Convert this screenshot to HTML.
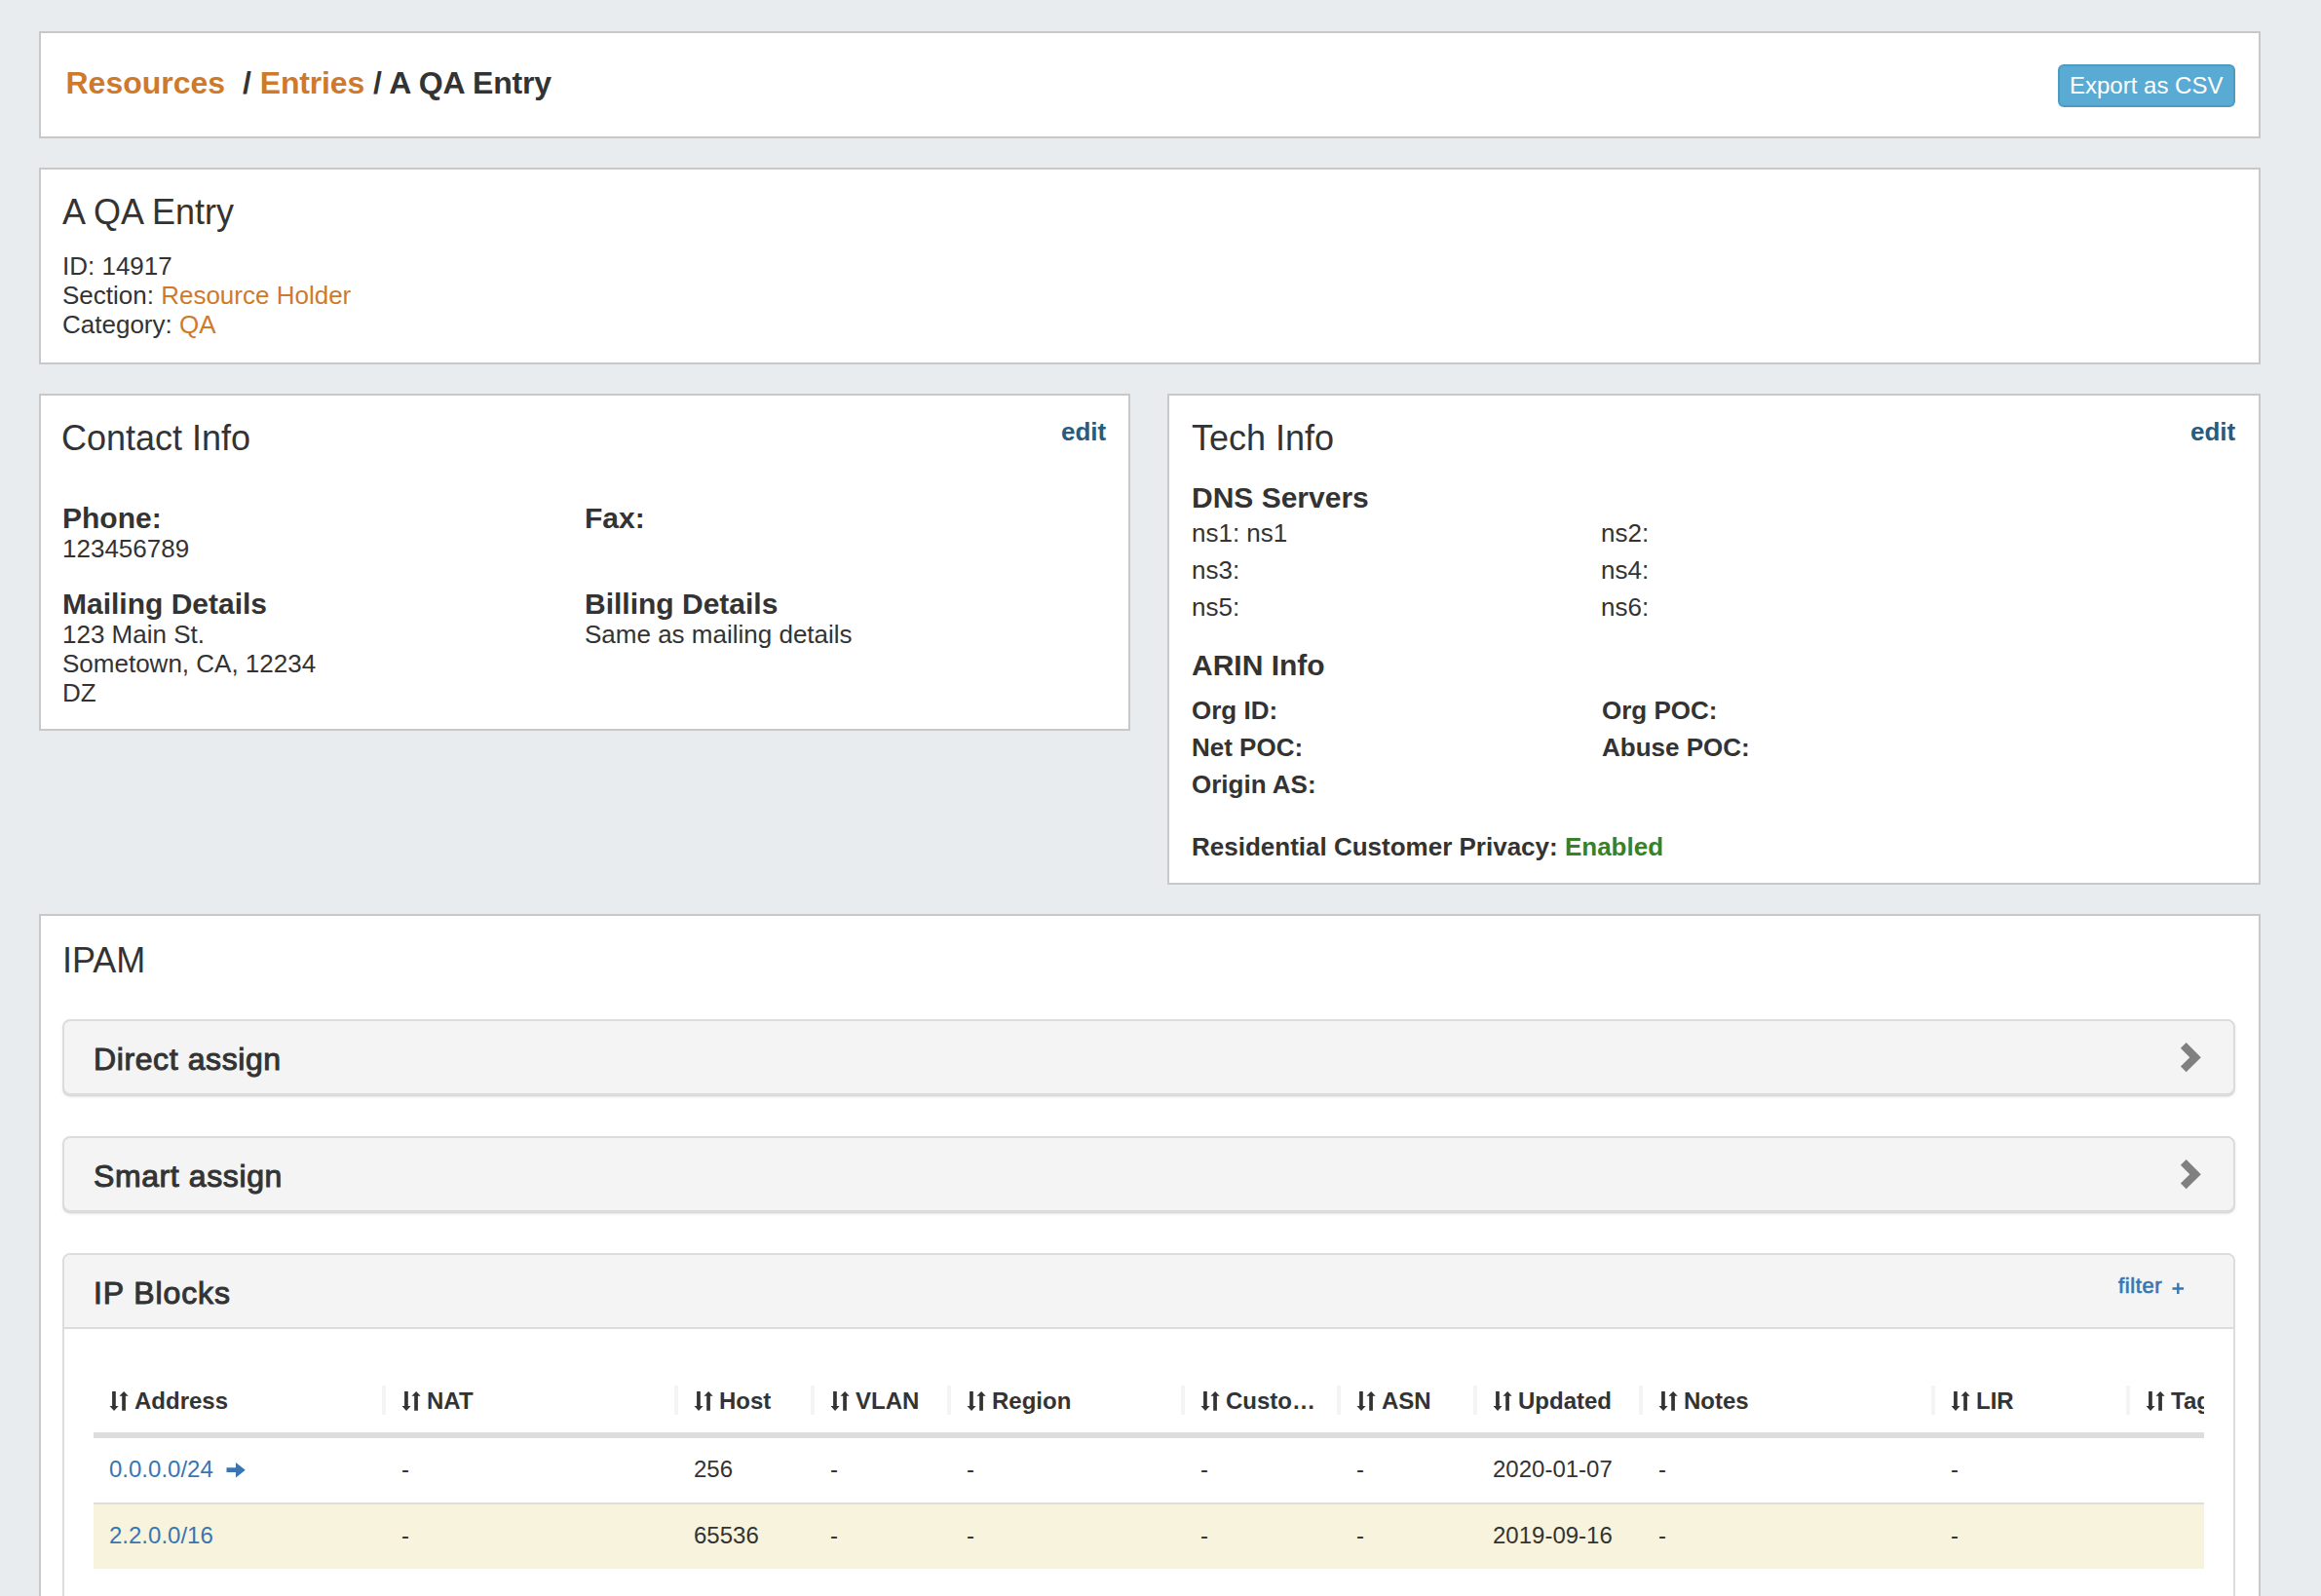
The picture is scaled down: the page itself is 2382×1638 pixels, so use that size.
<!DOCTYPE html>
<html><head><meta charset="utf-8"><style>
html,body{margin:0;padding:0;}
body{width:2382px;height:1638px;overflow:hidden;background:#e9ecef;position:relative;font-family:"Liberation Sans",sans-serif;color:#333;}
.t{position:absolute;white-space:nowrap;}
.r{position:absolute;}
@media (max-width:1300px){html{zoom:0.5;}}
</style></head><body>
<div class="r" style="left:40px;top:32px;width:2280px;height:110px;background:#fff;border:2px solid #c8c8c8;box-sizing:border-box"></div>
<div class="t" style="left:67.5px;top:64.91px;font-size:32px;line-height:40px;font-weight:700;color:#333;"><span style="color:#cf7a2b">Resources</span>&nbsp; / <span style="letter-spacing:-0.15px"><span style="color:#cf7a2b">Entries</span> / A QA Entry</span></div>
<div class="r" style="left:2112px;top:66px;width:182px;height:44px;background:#5aabd3;border:2px solid #4b9bc4;border-radius:6px;box-sizing:border-box"></div>
<div class="t" style="left:2124px;top:72.68px;font-size:24px;line-height:30px;color:#fff;">Export as CSV</div>
<div class="r" style="left:40px;top:172px;width:2280px;height:202px;background:#fff;border:2px solid #c8c8c8;box-sizing:border-box"></div>
<div class="t" style="left:64px;top:195.03px;font-size:36px;line-height:45px;color:#333;">A QA Entry</div>
<div class="t" style="left:64px;top:256.99px;font-size:26px;line-height:32px;color:#333;">ID: 14917</div>
<div class="t" style="left:64px;top:287.29px;font-size:26px;line-height:32px;color:#333;">Section: <span style="color:#cf7a2b">Resource Holder</span></div>
<div class="t" style="left:64px;top:316.99px;font-size:26px;line-height:32px;color:#333;">Category: <span style="color:#cf7a2b">QA</span></div>
<div class="r" style="left:40px;top:404px;width:1120px;height:346px;background:#fff;border:2px solid #c8c8c8;box-sizing:border-box"></div>
<div class="t" style="left:63px;top:427.03px;font-size:36px;line-height:45px;color:#333;">Contact Info</div>
<div class="t" style="left:1089px;top:426.99px;font-size:26px;line-height:32px;font-weight:700;color:#275b80;">edit</div>
<div class="t" style="left:64px;top:512.61px;font-size:30px;line-height:38px;font-weight:700;color:#333;">Phone:</div>
<div class="t" style="left:64px;top:546.99px;font-size:26px;line-height:32px;color:#333;">123456789</div>
<div class="t" style="left:600px;top:512.61px;font-size:30px;line-height:38px;font-weight:700;color:#333;">Fax:</div>
<div class="t" style="left:64px;top:600.61px;font-size:30px;line-height:38px;font-weight:700;color:#333;">Mailing Details</div>
<div class="t" style="left:64px;top:634.99px;font-size:26px;line-height:32px;color:#333;">123 Main St.</div>
<div class="t" style="left:64px;top:664.99px;font-size:26px;line-height:32px;color:#333;">Sometown, CA, 12234</div>
<div class="t" style="left:64px;top:694.99px;font-size:26px;line-height:32px;color:#333;">DZ</div>
<div class="t" style="left:600px;top:600.61px;font-size:30px;line-height:38px;font-weight:700;color:#333;">Billing Details</div>
<div class="t" style="left:600px;top:634.99px;font-size:26px;line-height:32px;color:#333;">Same as mailing details</div>
<div class="r" style="left:1198px;top:404px;width:1122px;height:504px;background:#fff;border:2px solid #c8c8c8;box-sizing:border-box"></div>
<div class="t" style="left:1223px;top:427.03px;font-size:36px;line-height:45px;color:#333;">Tech Info</div>
<div class="t" style="left:2248px;top:426.99px;font-size:26px;line-height:32px;font-weight:700;color:#275b80;">edit</div>
<div class="t" style="left:1223px;top:492.40px;font-size:30px;line-height:38px;font-weight:700;color:#333;">DNS Servers</div>
<div class="t" style="left:1223px;top:531.19px;font-size:26px;line-height:32px;color:#333;">ns1: ns1</div>
<div class="t" style="left:1223px;top:568.99px;font-size:26px;line-height:32px;color:#333;">ns3:</div>
<div class="t" style="left:1223px;top:606.79px;font-size:26px;line-height:32px;color:#333;">ns5:</div>
<div class="t" style="left:1643px;top:531.19px;font-size:26px;line-height:32px;color:#333;">ns2:</div>
<div class="t" style="left:1643px;top:568.99px;font-size:26px;line-height:32px;color:#333;">ns4:</div>
<div class="t" style="left:1643px;top:606.79px;font-size:26px;line-height:32px;color:#333;">ns6:</div>
<div class="t" style="left:1223px;top:664.40px;font-size:30px;line-height:38px;font-weight:700;color:#333;">ARIN Info</div>
<div class="t" style="left:1223px;top:713.19px;font-size:26px;line-height:32px;font-weight:700;color:#333;">Org ID:</div>
<div class="t" style="left:1223px;top:750.79px;font-size:26px;line-height:32px;font-weight:700;color:#333;">Net POC:</div>
<div class="t" style="left:1223px;top:789.39px;font-size:26px;line-height:32px;font-weight:700;color:#333;">Origin AS:</div>
<div class="t" style="left:1644px;top:712.99px;font-size:26px;line-height:32px;font-weight:700;color:#333;">Org POC:</div>
<div class="t" style="left:1644px;top:750.99px;font-size:26px;line-height:32px;font-weight:700;color:#333;">Abuse POC:</div>
<div class="t" style="left:1223px;top:852.99px;font-size:26px;line-height:32px;font-weight:700;color:#333;">Residential Customer Privacy: <span style="color:#36812a">Enabled</span></div>
<div class="r" style="left:40px;top:938px;width:2280px;height:762px;background:#fff;border:2px solid #c8c8c8;box-sizing:border-box"></div>
<div class="t" style="left:64px;top:963.23px;font-size:36px;line-height:45px;color:#333;">IPAM</div>
<div class="r" style="left:64px;top:1046px;width:2230px;height:78px;background:#f4f4f4;border:2px solid #dcdcdc;border-radius:8px;box-sizing:border-box;box-shadow:0 1.5px 0 #dcdcdc, 0 2px 4px rgba(0,0,0,0.06)"></div>
<div class="t" style="left:96px;top:1066.91px;font-size:32px;line-height:40px;color:#333;-webkit-text-stroke:1px #333;letter-spacing:0.6px">Direct assign</div>
<svg class="r" style="left:2236px;top:1068.0px" width="24" height="34" viewBox="0 0 24 34"><path d="M1.9 7.8 L7.7 2.1 L22.8 17.2 L7.7 32.2 L1.9 26.4 L11.3 17.2 Z" fill="#808080"/></svg>
<div class="r" style="left:64px;top:1166px;width:2230px;height:78px;background:#f4f4f4;border:2px solid #dcdcdc;border-radius:8px;box-sizing:border-box;box-shadow:0 1.5px 0 #dcdcdc, 0 2px 4px rgba(0,0,0,0.06)"></div>
<div class="t" style="left:96px;top:1186.91px;font-size:32px;line-height:40px;color:#333;-webkit-text-stroke:1px #333;letter-spacing:0.6px">Smart assign</div>
<svg class="r" style="left:2236px;top:1188.0px" width="24" height="34" viewBox="0 0 24 34"><path d="M1.9 7.8 L7.7 2.1 L22.8 17.2 L7.7 32.2 L1.9 26.4 L11.3 17.2 Z" fill="#808080"/></svg>
<div class="r" style="left:64px;top:1286px;width:2230px;height:414px;background:#fff;border:2px solid #dcdcdc;border-radius:8px;box-sizing:border-box"></div>
<div class="r" style="left:66px;top:1288px;width:2226px;height:74px;background:#f4f4f4;border-radius:6px 6px 0 0"></div>
<div class="r" style="left:66px;top:1362px;width:2226px;height:2px;background:#dcdcdc"></div>
<div class="t" style="left:96px;top:1306.91px;font-size:32px;line-height:40px;color:#333;-webkit-text-stroke:1px #333;letter-spacing:0.9px">IP Blocks</div>
<div class="t" style="left:2174px;top:1306.38px;font-size:22px;line-height:28px;color:#3a75b3;-webkit-text-stroke:0.7px #3a75b3;letter-spacing:0.6px">filter</div>
<svg class="r" style="left:2229px;top:1316px" width="13" height="13" viewBox="0 0 13 13"><path d="M5.1 0.7 H7.5 V5.3 H12.1 V7.7 H7.5 V12.1 H5.1 V7.7 H0.5 V5.3 H5.1 Z" fill="#3a75b3"/></svg>
<div class="r" style="left:96px;top:1400px;width:2166px;height:300px;overflow:hidden">
<svg class="r" style="left:16px;top:26px" width="22" height="24" viewBox="0 0 22 24"><path d="M3.1 1.9 H6.8 V17.1 H9.6 L5.05 22 L0.5 17.1 H3.1 Z M13.2 21.8 H16.9 V6.8 H19.7 L15.1 1.9 L10.5 6.8 H13.2 Z" fill="#333"/></svg>
<div class="t" style="left:42px;top:22.68px;font-size:24px;line-height:30px;font-weight:700;color:#333;">Address</div>
<svg class="r" style="left:316px;top:26px" width="22" height="24" viewBox="0 0 22 24"><path d="M3.1 1.9 H6.8 V17.1 H9.6 L5.05 22 L0.5 17.1 H3.1 Z M13.2 21.8 H16.9 V6.8 H19.7 L15.1 1.9 L10.5 6.8 H13.2 Z" fill="#333"/></svg>
<div class="t" style="left:342px;top:22.68px;font-size:24px;line-height:30px;font-weight:700;color:#333;">NAT</div>
<div class="r" style="left:296px;top:22px;width:4px;height:30px;background:#f4f4f4"></div>
<svg class="r" style="left:616px;top:26px" width="22" height="24" viewBox="0 0 22 24"><path d="M3.1 1.9 H6.8 V17.1 H9.6 L5.05 22 L0.5 17.1 H3.1 Z M13.2 21.8 H16.9 V6.8 H19.7 L15.1 1.9 L10.5 6.8 H13.2 Z" fill="#333"/></svg>
<div class="t" style="left:642px;top:22.68px;font-size:24px;line-height:30px;font-weight:700;color:#333;">Host</div>
<div class="r" style="left:596px;top:22px;width:4px;height:30px;background:#f4f4f4"></div>
<svg class="r" style="left:756px;top:26px" width="22" height="24" viewBox="0 0 22 24"><path d="M3.1 1.9 H6.8 V17.1 H9.6 L5.05 22 L0.5 17.1 H3.1 Z M13.2 21.8 H16.9 V6.8 H19.7 L15.1 1.9 L10.5 6.8 H13.2 Z" fill="#333"/></svg>
<div class="t" style="left:782px;top:22.68px;font-size:24px;line-height:30px;font-weight:700;color:#333;">VLAN</div>
<div class="r" style="left:736px;top:22px;width:4px;height:30px;background:#f4f4f4"></div>
<svg class="r" style="left:896px;top:26px" width="22" height="24" viewBox="0 0 22 24"><path d="M3.1 1.9 H6.8 V17.1 H9.6 L5.05 22 L0.5 17.1 H3.1 Z M13.2 21.8 H16.9 V6.8 H19.7 L15.1 1.9 L10.5 6.8 H13.2 Z" fill="#333"/></svg>
<div class="t" style="left:922px;top:22.68px;font-size:24px;line-height:30px;font-weight:700;color:#333;">Region</div>
<div class="r" style="left:876px;top:22px;width:4px;height:30px;background:#f4f4f4"></div>
<svg class="r" style="left:1136px;top:26px" width="22" height="24" viewBox="0 0 22 24"><path d="M3.1 1.9 H6.8 V17.1 H9.6 L5.05 22 L0.5 17.1 H3.1 Z M13.2 21.8 H16.9 V6.8 H19.7 L15.1 1.9 L10.5 6.8 H13.2 Z" fill="#333"/></svg>
<div class="t" style="left:1162px;top:22.68px;font-size:24px;line-height:30px;font-weight:700;color:#333;">Custo…</div>
<div class="r" style="left:1116px;top:22px;width:4px;height:30px;background:#f4f4f4"></div>
<svg class="r" style="left:1296px;top:26px" width="22" height="24" viewBox="0 0 22 24"><path d="M3.1 1.9 H6.8 V17.1 H9.6 L5.05 22 L0.5 17.1 H3.1 Z M13.2 21.8 H16.9 V6.8 H19.7 L15.1 1.9 L10.5 6.8 H13.2 Z" fill="#333"/></svg>
<div class="t" style="left:1322px;top:22.68px;font-size:24px;line-height:30px;font-weight:700;color:#333;">ASN</div>
<div class="r" style="left:1276px;top:22px;width:4px;height:30px;background:#f4f4f4"></div>
<svg class="r" style="left:1436px;top:26px" width="22" height="24" viewBox="0 0 22 24"><path d="M3.1 1.9 H6.8 V17.1 H9.6 L5.05 22 L0.5 17.1 H3.1 Z M13.2 21.8 H16.9 V6.8 H19.7 L15.1 1.9 L10.5 6.8 H13.2 Z" fill="#333"/></svg>
<div class="t" style="left:1462px;top:22.68px;font-size:24px;line-height:30px;font-weight:700;color:#333;">Updated</div>
<div class="r" style="left:1416px;top:22px;width:4px;height:30px;background:#f4f4f4"></div>
<svg class="r" style="left:1606px;top:26px" width="22" height="24" viewBox="0 0 22 24"><path d="M3.1 1.9 H6.8 V17.1 H9.6 L5.05 22 L0.5 17.1 H3.1 Z M13.2 21.8 H16.9 V6.8 H19.7 L15.1 1.9 L10.5 6.8 H13.2 Z" fill="#333"/></svg>
<div class="t" style="left:1632px;top:22.68px;font-size:24px;line-height:30px;font-weight:700;color:#333;">Notes</div>
<div class="r" style="left:1586px;top:22px;width:4px;height:30px;background:#f4f4f4"></div>
<svg class="r" style="left:1906px;top:26px" width="22" height="24" viewBox="0 0 22 24"><path d="M3.1 1.9 H6.8 V17.1 H9.6 L5.05 22 L0.5 17.1 H3.1 Z M13.2 21.8 H16.9 V6.8 H19.7 L15.1 1.9 L10.5 6.8 H13.2 Z" fill="#333"/></svg>
<div class="t" style="left:1932px;top:22.68px;font-size:24px;line-height:30px;font-weight:700;color:#333;">LIR</div>
<div class="r" style="left:1886px;top:22px;width:4px;height:30px;background:#f4f4f4"></div>
<svg class="r" style="left:2106px;top:26px" width="22" height="24" viewBox="0 0 22 24"><path d="M3.1 1.9 H6.8 V17.1 H9.6 L5.05 22 L0.5 17.1 H3.1 Z M13.2 21.8 H16.9 V6.8 H19.7 L15.1 1.9 L10.5 6.8 H13.2 Z" fill="#333"/></svg>
<div class="t" style="left:2132px;top:22.68px;font-size:24px;line-height:30px;font-weight:700;color:#333;">Tag</div>
<div class="r" style="left:2086px;top:22px;width:4px;height:30px;background:#f4f4f4"></div>
<div class="r" style="left:0px;top:70px;width:2304px;height:6px;background:#dddddd"></div>
<div class="r" style="left:0px;top:142px;width:2304px;height:2px;background:#dddddd"></div>
<div class="r" style="left:0px;top:144px;width:2304px;height:66px;background:#f8f3dc"></div>
<div class="t" style="left:16px;top:92.98px;font-size:24px;line-height:30px;color:#3a75b3;">0.0.0.0/24</div>
<div class="t" style="left:16px;top:160.68px;font-size:24px;line-height:30px;color:#3a75b3;">2.2.0.0/16</div>
<div class="t" style="left:316px;top:92.98px;font-size:24px;line-height:30px;color:#333;">-</div>
<div class="t" style="left:316px;top:160.68px;font-size:24px;line-height:30px;color:#333;">-</div>
<div class="t" style="left:616px;top:92.98px;font-size:24px;line-height:30px;color:#333;">256</div>
<div class="t" style="left:616px;top:160.68px;font-size:24px;line-height:30px;color:#333;">65536</div>
<div class="t" style="left:756px;top:92.98px;font-size:24px;line-height:30px;color:#333;">-</div>
<div class="t" style="left:756px;top:160.68px;font-size:24px;line-height:30px;color:#333;">-</div>
<div class="t" style="left:896px;top:92.98px;font-size:24px;line-height:30px;color:#333;">-</div>
<div class="t" style="left:896px;top:160.68px;font-size:24px;line-height:30px;color:#333;">-</div>
<div class="t" style="left:1136px;top:92.98px;font-size:24px;line-height:30px;color:#333;">-</div>
<div class="t" style="left:1136px;top:160.68px;font-size:24px;line-height:30px;color:#333;">-</div>
<div class="t" style="left:1296px;top:92.98px;font-size:24px;line-height:30px;color:#333;">-</div>
<div class="t" style="left:1296px;top:160.68px;font-size:24px;line-height:30px;color:#333;">-</div>
<div class="t" style="left:1436px;top:92.98px;font-size:24px;line-height:30px;color:#333;">2020-01-07</div>
<div class="t" style="left:1436px;top:160.68px;font-size:24px;line-height:30px;color:#333;">2019-09-16</div>
<div class="t" style="left:1606px;top:92.98px;font-size:24px;line-height:30px;color:#333;">-</div>
<div class="t" style="left:1606px;top:160.68px;font-size:24px;line-height:30px;color:#333;">-</div>
<div class="t" style="left:1906px;top:92.98px;font-size:24px;line-height:30px;color:#333;">-</div>
<div class="t" style="left:1906px;top:160.68px;font-size:24px;line-height:30px;color:#333;">-</div>
<svg class="r" style="left:136px;top:99px" width="20" height="20" viewBox="0 0 20 20"><path d="M0.5 7.3 H10 V2 L19.8 9.75 L10 17.5 V12.1 H0.5 Z" fill="#3a75b3"/></svg>
</div>
</body></html>
